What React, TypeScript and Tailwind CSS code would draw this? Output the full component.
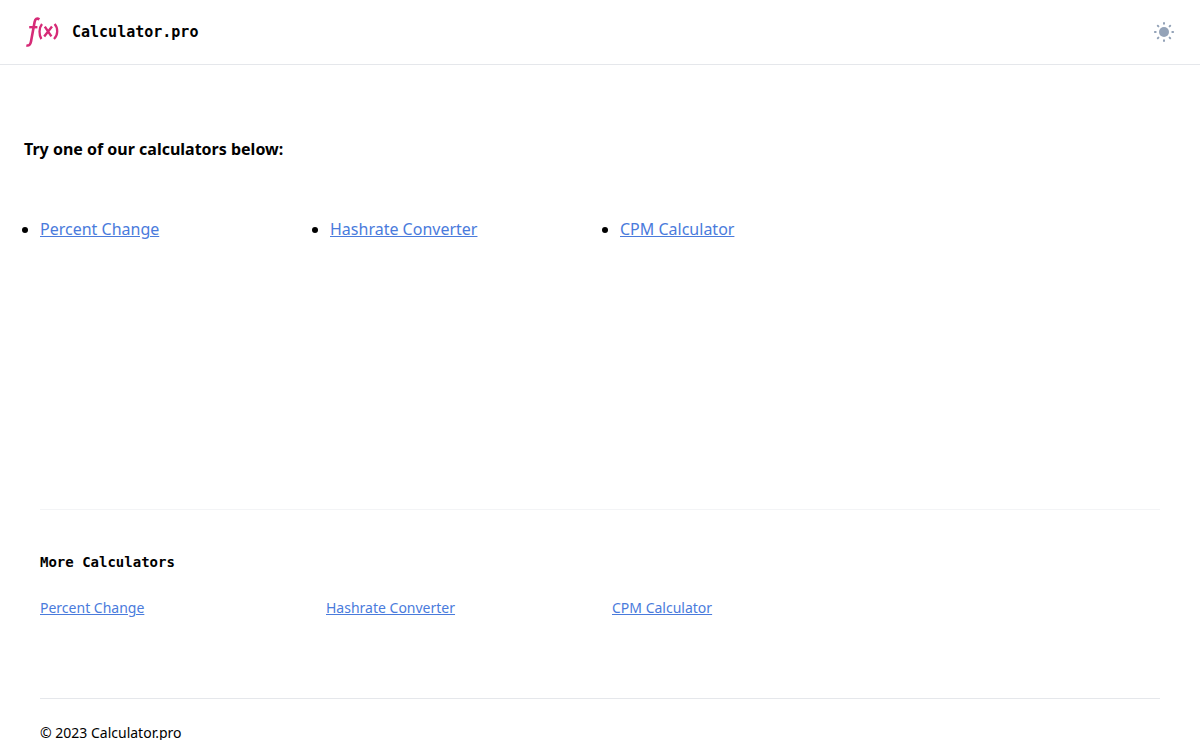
import React from 'react';

const calculators = [
  { name: 'Percent Change', href: '#percent-change' },
  { name: 'Hashrate Converter', href: '#hashrate-converter' },
  { name: 'CPM Calculator', href: '#cpm-calculator' },
];

const Logo: React.FC = () => (
  <svg width="36" height="32" viewBox="0 0 36 32" fill="none" stroke="#d62b77" aria-hidden="true">
    <path d="M15.4 3.4C12.8 1.7 11.2 3 10.6 6L7 25.5C6.4 28.6 5 30.2 2.4 29.3" strokeWidth="2.6" />
    <path d="M5.2 11.2H13.4" strokeWidth="2.4" />
    <path d="M18 8C14.8 12 14.8 19 17.4 23" strokeWidth="2.3" />
    <path d="M30.6 8C34.2 12 34.2 19 30 23" strokeWidth="2.3" />
    <path d="M20.8 10.6L27.4 20.4M28 10.6L20.2 20.4" strokeWidth="2.4" />
  </svg>
);

const SunIcon: React.FC = () => (
  <svg width="24" height="24" viewBox="0 0 24 24" fill="#94a3b8" stroke="#94a3b8" aria-hidden="true">
    <circle cx="12" cy="12" r="5" stroke="none" />
    <path
      d="M12 2.9V3.7M12 20.3V21.1M2.9 12H3.7M20.3 12H21.1M5.8 5.8L6.4 6.4M17.6 17.6L18.2 18.2M5.8 18.2L6.4 17.6M17.6 6.4L18.2 5.8"
      strokeWidth="2"
      strokeLinecap="round"
    />
  </svg>
);

const linkStyle = 'text-[#4a7bdc] underline hover:text-blue-700';

const App: React.FC = () => {
  return (
    <div className="min-h-screen bg-white text-black font-['Segoe_UI','Noto_Sans',sans-serif]">
      <header className="flex h-[65px] items-center justify-between border-b border-gray-200 px-6">
        <a href="#home" className="flex items-center gap-3 font-['DejaVu_Sans_Mono',monospace] text-[15px] font-bold">
          <Logo />
          Calculator.pro
        </a>
        <button type="button" aria-label="Toggle theme">
          <SunIcon />
        </button>
      </header>

      <main className="min-h-[444px] px-6 pt-[70px]">
        <h1 className="text-base leading-7 font-bold">Try one of our calculators below:</h1>
        <ul className="mt-[52px] grid list-disc grid-cols-4 gap-6 pl-4">
          {calculators.map((calc) => (
            <li key={calc.href} className="text-base leading-7">
              <a href={calc.href} className={linkStyle}>{calc.name}</a>
            </li>
          ))}
        </ul>
      </main>

      <footer className="px-10">
        <div className="border-t border-gray-100 pt-10">
          <h2 className="font-['DejaVu_Sans_Mono',monospace] text-sm leading-6 font-bold">More Calculators</h2>
          <ul className="mt-[22px] grid grid-cols-4 gap-6">
            {calculators.map((calc) => (
              <li key={calc.href} className="text-sm leading-6">
                <a href={calc.href} className={linkStyle}>{calc.name}</a>
              </li>
            ))}
          </ul>
        </div>
        <p className="mt-[78px] border-t border-gray-200 pt-6 text-sm leading-5">© 2023 Calculator.pro</p>
      </footer>
    </div>
  );
};

export default App;
